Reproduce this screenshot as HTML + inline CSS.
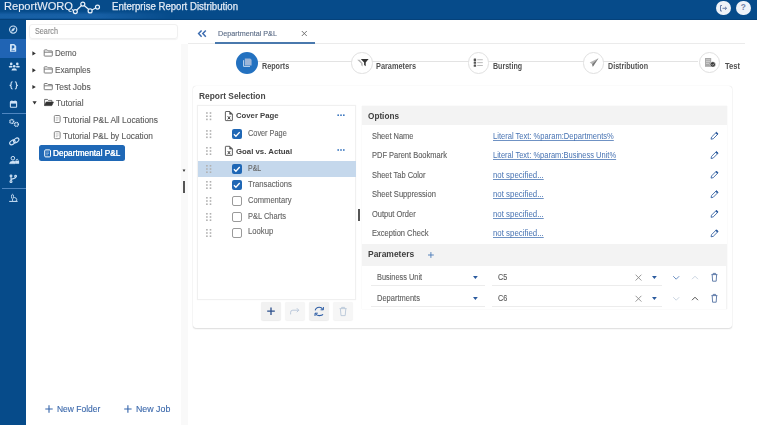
<!DOCTYPE html>
<html><head><meta charset="utf-8">
<style>
*{box-sizing:border-box;margin:0;padding:0}
html,body{width:757px;height:425px;overflow:hidden;background:#fff;font-family:"Liberation Sans",sans-serif;color:#555}
.a{position:absolute;white-space:nowrap}
svg{position:absolute;overflow:visible}
#hdr{left:0;top:0;width:757px;height:19.5px;background:#064b8a;box-shadow:inset 0 -0.8px 0 #053f75}
#side{left:0;top:19.5px;width:26px;height:406px;background:#064b8a}
.div{position:absolute;left:2px;width:24px;height:1px;background:#4f86c0}
#tree{left:26px;top:19.5px;width:154px;height:406px;background:#fff}
#strip{left:180.5px;top:44px;width:7.5px;height:381px;background:#f9f9f9}
.tx{font-size:8.2px;color:#5a5a5a}
</style></head><body>

<!-- HEADER -->
<div class="a" id="hdr"></div>
<div class="a" style="left:0;top:11px;width:175px;height:7.8px;background:linear-gradient(180deg,rgba(40,115,190,0) 0%,rgba(40,115,190,0.5) 45%,rgba(40,115,190,0.55) 80%,rgba(40,115,190,0.2) 100%);-webkit-mask-image:linear-gradient(90deg,#000 0%,#000 55%,transparent 100%)"></div>
<svg style="left:0;top:0" width="110" height="19">
  <g fill="none" stroke="#eaf2fb" stroke-width="1.2">
    <path d="M71.8 9.6 L73.6 10.6 M76.6 10.2 L81.5 5.5 M84.2 5.5 L88.8 9.5 M92 10 L95.6 8"/>
    <circle cx="75.3" cy="11.6" r="2"/>
    <circle cx="82.8" cy="4.1" r="2"/>
    <circle cx="90.1" cy="10.9" r="2"/>
    <circle cx="97.5" cy="7.1" r="2"/>
  </g>
</svg>
<div class="a" style="left:716px;top:0.7px;width:14.6px;height:14.6px;border-radius:50%;background:#eef2f8"></div>
<div class="a" style="left:736px;top:0.7px;width:14.6px;height:14.6px;border-radius:50%;background:#eef2f8"></div>
<svg style="left:716px;top:0.7px" width="15" height="15">
  <g fill="none" stroke="#5a72a0" stroke-width="0.9">
    <path d="M6 4.5 H4.5 V10 H6"/>
    <path d="M6.5 7.3 H10.5 M9 5.8 L10.6 7.3 L9 8.8"/>
  </g>
</svg>
<div class="a" style="left:736px;top:2.6px;width:14.6px;text-align:center;font-size:8.4px;line-height:1;font-weight:700;color:#7083a8">?</div>

<!-- SIDEBAR -->
<div class="a" id="side"></div>
<div class="a" style="left:0;top:38.7px;width:26px;height:19.8px;background:#2064b4"></div>
<div class="div" style="top:113px"></div>
<div class="div" style="top:188px"></div>
<svg style="left:0;top:0" width="26" height="425">
  <g fill="none" stroke="#cfe3f7" stroke-width="1.1">
    <!-- compass -->
    <circle cx="13.2" cy="29.6" r="3.6"/>
    <path d="M11.3 31.5 L12.3 28.9 L14.9 27.8 L13.9 30.4 Z" fill="#cfe3f7" stroke-width="0.4"/>
    <!-- braces -->
    <path d="M12.6 81.8 Q11.1 81.8 11.1 83.2 V84.6 Q11.1 85.4 9.6 85.4 Q11.1 85.4 11.1 86.2 V87.6 Q11.1 89 12.6 89"/>
    <path d="M14.9 81.8 Q16.4 81.8 16.4 83.2 V84.6 Q16.4 85.4 17.9 85.4 Q16.4 85.4 16.4 86.2 V87.6 Q16.4 89 14.9 89"/>
    <!-- calendar -->
    <rect x="10.4" y="101.6" width="6.2" height="5.7" rx="0.6"/>
    <path d="M10.4 102.6 H16.6" stroke-width="2"/>
    <path d="M11.9 100.4 V101.6 M15.1 100.4 V101.6" stroke-width="0.9"/>
    <!-- gears -->
    <circle cx="11.8" cy="121.5" r="1.9" stroke-width="1.5" stroke-dasharray="1 0.4"/>
    <circle cx="16.4" cy="124.4" r="1.9" stroke-width="1.5" stroke-dasharray="1 0.4"/>
    <!-- link -->
    <ellipse cx="12.4" cy="142.4" rx="3" ry="1.9" transform="rotate(-35 12.4 142.4)"/>
    <ellipse cx="16.2" cy="140.4" rx="3" ry="1.9" transform="rotate(-35 16.2 140.4)"/>
    <!-- user lock -->
    <circle cx="12.9" cy="158.2" r="1.8" stroke-width="1"/>
    <path d="M9.4 163.8 Q9.6 160.9 12.9 160.9 Q14.2 160.9 15 161.3 V163.8 Z" fill="#cfe3f7" stroke-width="0.3"/>
    <path d="M16.1 161.2 V159.9 Q17.1 158.3 18.1 159.9 V161.2" stroke-width="0.8"/>
    <!-- branch -->
    <circle cx="11" cy="175.9" r="0.9"/>
    <circle cx="15.6" cy="176.2" r="0.9"/>
    <circle cx="11" cy="181.5" r="1"/>
    <path d="M11 176.8 V180.5 M15.6 177.1 Q15.6 178.6 12.6 178.9 Q11.2 179.1 11 180"/>
    <!-- microscope -->
    <ellipse cx="12.5" cy="196.6" rx="1" ry="2.3" stroke-width="0.9"/>
    <path d="M9.2 201.4 H17.6" stroke-width="1"/>
    <path d="M12.5 199 V201" stroke-width="0.8"/>
    <path d="M14.2 197.4 Q16.8 197.8 16.8 199.8 Q16.8 201 15.6 201.2" stroke-width="0.9"/>
  </g>
  <g fill="#cfe3f7">
    <!-- file (active) -->
    <path d="M10.6 44 H14.2 L16.2 46 V51.2 Q16.2 51.8 15.6 51.8 H10.6 Q10 51.8 10 51.2 V44.6 Q10 44 10.6 44 Z"/>
    <path d="M11.8 45.6 H13.2 Q14.4 45.6 14.4 46.9 Q14.4 48.2 13.2 48.2 H12.6 V49.4 H11.8 Z" fill="#2064b4"/>
    <rect x="11.4" y="50.2" width="3.4" height="0.6" fill="#2064b4"/>
    <!-- users -->
    <circle cx="11.2" cy="63.9" r="1.3"/>
    <circle cx="17.3" cy="63.9" r="1.3"/>
    <ellipse cx="10.6" cy="66.7" rx="1.9" ry="0.9"/>
    <ellipse cx="17.9" cy="66.7" rx="1.9" ry="0.9"/>
    <circle cx="14.2" cy="66.2" r="1.3"/>
    <path d="M11.4 70.6 Q11.6 68.2 14.2 68.2 Q16.8 68.2 17 70.6 Z"/>
    <!-- user-lock body -->
    <rect x="15.1" y="161" width="4" height="2.8" rx="0.3"/>
  </g>
</svg>

<!-- TREE PANEL -->
<div class="a" id="tree"></div>
<div class="a" id="strip"></div>
<div class="a" style="left:29.3px;top:24.3px;width:148.6px;height:14.3px;border:1px solid #f0f0f0;border-radius:3px;box-shadow:0 1px 1px rgba(0,0,0,0.05)"></div>

<div class="a" style="left:4.40px;top:0px;font-size:11.600px;line-height:1;color:#e8eef7;font-weight:400;transform:scaleX(0.9558);transform-origin:0 0;-webkit-text-stroke:0.12px #e8eef7;">ReportWORQ</div>
<div class="a" style="left:111.50px;top:2px;font-size:10.000px;line-height:1;color:#e3ebf6;font-weight:400;transform:scaleX(0.9606);transform-origin:0 0;-webkit-text-stroke:0.12px #e3ebf6;-webkit-text-stroke:0.25px #e3ebf6">Enterprise Report Distribution</div>
<div class="a" style="left:34.90px;top:28px;font-size:8.200px;line-height:1;color:#8a8a8a;font-weight:400;transform:scaleX(0.8852);transform-origin:0 0;-webkit-text-stroke:0.12px #8a8a8a;">Search</div>
<svg style="left:0;top:0" width="1" height="1"><path d="M32.4 51.3 L35.8 53.4 L32.4 55.5 Z" fill="#333"/></svg>
<svg style="left:0;top:0" width="1" height="1"><g fill="none" stroke="#707070" stroke-width="0.9"><path d="M44.699999999999996 49.9 H47.199999999999996 L48.199999999999996 50.9 H51.8 Q52.3 50.9 52.3 51.4 V55.6 Q52.3 56.1 51.8 56.1 H44.699999999999996 Q44.199999999999996 56.1 44.199999999999996 55.6 V50.4 Q44.199999999999996 49.9 44.699999999999996 49.9 Z"/><path d="M44.199999999999996 52.199999999999996 H52.3"/></g></svg>
<div class="a" style="left:54.80px;top:49px;font-size:8.300px;line-height:1;color:#5c5c5c;font-weight:400;transform:scaleX(0.9661);transform-origin:0 0;-webkit-text-stroke:0.12px #5c5c5c;">Demo</div>
<svg style="left:0;top:0" width="1" height="1"><path d="M32.4 68.20000000000002 L35.8 70.30000000000001 L32.4 72.4 Z" fill="#333"/></svg>
<svg style="left:0;top:0" width="1" height="1"><g fill="none" stroke="#707070" stroke-width="0.9"><path d="M44.699999999999996 66.80000000000001 H47.199999999999996 L48.199999999999996 67.80000000000001 H51.8 Q52.3 67.80000000000001 52.3 68.30000000000001 V72.50000000000001 Q52.3 73.00000000000001 51.8 73.00000000000001 H44.699999999999996 Q44.199999999999996 73.00000000000001 44.199999999999996 72.50000000000001 V67.30000000000001 Q44.199999999999996 66.80000000000001 44.699999999999996 66.80000000000001 Z"/><path d="M44.199999999999996 69.10000000000001 H52.3"/></g></svg>
<div class="a" style="left:54.80px;top:66px;font-size:8.300px;line-height:1;color:#5c5c5c;font-weight:400;transform:scaleX(0.9796);transform-origin:0 0;-webkit-text-stroke:0.12px #5c5c5c;">Examples</div>
<svg style="left:0;top:0" width="1" height="1"><path d="M32.4 84.9 L35.8 87.0 L32.4 89.1 Z" fill="#333"/></svg>
<svg style="left:0;top:0" width="1" height="1"><g fill="none" stroke="#707070" stroke-width="0.9"><path d="M44.699999999999996 83.5 H47.199999999999996 L48.199999999999996 84.5 H51.8 Q52.3 84.5 52.3 85.0 V89.2 Q52.3 89.7 51.8 89.7 H44.699999999999996 Q44.199999999999996 89.7 44.199999999999996 89.2 V84.0 Q44.199999999999996 83.5 44.699999999999996 83.5 Z"/><path d="M44.199999999999996 85.8 H52.3"/></g></svg>
<div class="a" style="left:54.80px;top:83px;font-size:8.300px;line-height:1;color:#5c5c5c;font-weight:400;transform:scaleX(1.0180);transform-origin:0 0;-webkit-text-stroke:0.12px #5c5c5c;">Test Jobs</div>
<svg style="left:0;top:0" width="1" height="1"><path d="M32.5 101.2 L36.7 101.2 L34.6 104.5 Z" fill="#333"/></svg>
<svg style="left:0;top:0" width="1" height="1"><g fill="#333" stroke="#333" stroke-width="0.7"><path d="M44.6 105.6 V99.4 H47.400000000000006 L48.400000000000006 100.4 H51.800000000000004 V101.8" fill="none"/><path d="M44.6 105.6 L46.2 102.0 H53.400000000000006 L51.800000000000004 105.6 Z"/></g></svg>
<div class="a" style="left:56.10px;top:99px;font-size:8.300px;line-height:1;color:#5c5c5c;font-weight:400;transform:scaleX(1.0045);transform-origin:0 0;-webkit-text-stroke:0.12px #5c5c5c;">Tutorial</div>
<svg style="left:0;top:0" width="1" height="1"><g fill="none" stroke="#858585" stroke-width="1"><rect x="54.3" y="115.5" width="5.8" height="7" rx="1"/><path d="M55.8 117.6 H58.599999999999994 M55.8 119.0 H58.599999999999994 M55.8 120.4 H57.599999999999994" stroke-width="0.6" opacity="0.7"/></g></svg>
<div class="a" style="left:62.90px;top:116px;font-size:8.300px;line-height:1;color:#5c5c5c;font-weight:400;transform:scaleX(1.0109);transform-origin:0 0;-webkit-text-stroke:0.12px #5c5c5c;">Tutorial P&amp;L All Locations</div>
<svg style="left:0;top:0" width="1" height="1"><g fill="none" stroke="#858585" stroke-width="1"><rect x="54.3" y="131.70000000000002" width="5.8" height="7" rx="1"/><path d="M55.8 133.8 H58.599999999999994 M55.8 135.20000000000002 H58.599999999999994 M55.8 136.60000000000002 H57.599999999999994" stroke-width="0.6" opacity="0.7"/></g></svg>
<div class="a" style="left:62.90px;top:132px;font-size:8.300px;line-height:1;color:#5c5c5c;font-weight:400;transform:scaleX(1.0020);transform-origin:0 0;-webkit-text-stroke:0.12px #5c5c5c;">Tutorial P&amp;L by Location</div>
<div class="a" style="left:39.2px;top:145.3px;width:86px;height:16.1px;background:#1f68b6;border-radius:2.5px"></div>
<svg style="left:0;top:0" width="1" height="1"><g fill="none" stroke="#fff" stroke-width="1"><rect x="44.7" y="149.9" width="5.8" height="7" rx="1"/><path d="M46.2 152.0 H49.0 M46.2 153.4 H49.0 M46.2 154.8 H48.0" stroke-width="0.6" opacity="0.7"/></g></svg>
<div class="a" style="left:52.60px;top:149px;font-size:8.300px;line-height:1;color:#fff;font-weight:400;transform:scaleX(0.9937);transform-origin:0 0;-webkit-text-stroke:0.12px #fff;text-shadow:0 0 0.3px #fff">Departmental P&amp;L</div>
<svg style="left:0;top:0" width="1" height="1"><path d="M45.3 409 H52.7 M49 405.3 V412.7 M124.2 409 H131.6 M127.9 405.3 V412.7" stroke="#3565ab" stroke-width="1.1"/></svg>
<div class="a" style="left:57.00px;top:404px;font-size:9.600px;line-height:1;color:#3b68ab;font-weight:400;transform:scaleX(0.8840);transform-origin:0 0;-webkit-text-stroke:0.12px #3b68ab;">New Folder</div>
<div class="a" style="left:135.70px;top:404px;font-size:9.600px;line-height:1;color:#3b68ab;font-weight:400;transform:scaleX(0.9183);transform-origin:0 0;-webkit-text-stroke:0.12px #3b68ab;">New Job</div>
<div class="a" style="left:188px;top:19.5px;width:557px;height:24px;background:#fff;border-bottom:1px solid #ebebeb"></div>
<svg style="left:0;top:0" width="1" height="1"><g fill="none" stroke="#3c6cb0" stroke-width="1.5"><path d="M201.6 30.4 L198.6 33.6 L201.6 36.8 M205.8 30.4 L202.8 33.6 L205.8 36.8"/></g></svg>
<div class="a" style="left:217.80px;top:30px;font-size:7.700px;line-height:1;color:#5a6b85;font-weight:400;transform:scaleX(0.9376);transform-origin:0 0;-webkit-text-stroke:0.12px #5a6b85;">Departmental P&amp;L</div>
<svg style="left:0;top:0" width="1" height="1"><path d="M301.8 31 L306.8 36 M306.8 31 L301.8 36" stroke="#666" stroke-width="0.9"/></svg>
<div class="a" style="left:214.9px;top:42px;width:100.1px;height:1.6px;background:#4a79ad"></div>
<div class="a" style="left:258px;top:61px;width:440px;height:1px;background:#e3e3e3"></div>
<div class="a" style="left:236px;top:51.8px;width:22px;height:22px;border-radius:50%;background:#2371c0"></div>
<div class="a" style="left:261.80px;top:63px;font-size:8.200px;line-height:1;color:#505050;font-weight:700;transform:scaleX(0.8776);transform-origin:0 0;">Reports</div>
<div class="a" style="left:351.4px;top:52.4px;width:21.2px;height:21.2px;border-radius:50%;background:#fff;border:1px solid #e0e0e0"></div>
<div class="a" style="left:376.30px;top:63px;font-size:8.200px;line-height:1;color:#505050;font-weight:700;transform:scaleX(0.8975);transform-origin:0 0;">Parameters</div>
<div class="a" style="left:467.79999999999995px;top:52.4px;width:21.2px;height:21.2px;border-radius:50%;background:#fff;border:1px solid #e0e0e0"></div>
<div class="a" style="left:493.30px;top:63px;font-size:8.200px;line-height:1;color:#505050;font-weight:700;transform:scaleX(0.8633);transform-origin:0 0;">Bursting</div>
<div class="a" style="left:583.3px;top:52.4px;width:21.2px;height:21.2px;border-radius:50%;background:#fff;border:1px solid #e0e0e0"></div>
<div class="a" style="left:607.60px;top:63px;font-size:8.200px;line-height:1;color:#505050;font-weight:700;transform:scaleX(0.8716);transform-origin:0 0;">Distribution</div>
<div class="a" style="left:698.6px;top:52.1px;width:21.2px;height:21.2px;border-radius:50%;background:#fff;border:1px solid #e0e0e0"></div>
<div class="a" style="left:724.50px;top:63px;font-size:8.200px;line-height:1;color:#505050;font-weight:700;transform:scaleX(0.9226);transform-origin:0 0;">Test</div>
<svg style="left:0;top:0" width="1" height="1"><path d="M243.6 60.2 V66.4 H250" stroke="#d4e3f4" stroke-width="0.9" fill="none"/><path d="M244.8 58.4 H250.2 L251.6 59.8 V65.6 H244.8 Z" fill="#9db6d8"/><g fill="#333"><path d="M360.8 59 H368.6 L365.7 62.6 V66.2 L364.1 64.9 V62.6 Z"/></g><g fill="#b0b0b0"><path d="M357.2 59.8 H359.6 L362.6 63.2 V66.6 L361.2 65.2 V63.4 Z"/></g><g fill="#555"><rect x="473.7" y="58.6" width="2.4" height="2.3" rx="0.5"/><rect x="473.7" y="61.5" width="2.4" height="2.3" rx="0.5"/><rect x="473.7" y="64.4" width="2.4" height="2.3" rx="0.5"/><rect x="477.2" y="59.4" width="5.6" height="0.8" fill="#aaa"/><rect x="477.2" y="62.3" width="5.6" height="0.8" fill="#aaa"/><rect x="477.2" y="65.2" width="5.6" height="0.8" fill="#aaa"/></g><g><path d="M598.5 58.2 L589.7 62.6 L592.2 64.2 L592.8 66.8 Z" fill="#b5b5b5"/><path d="M598.5 58.2 L592.2 64.2 L592.8 66.8 Z" fill="#777"/></g><g><path d="M705 58 H711.2 V66.8 H705 Z" fill="#a8a8a8"/><path d="M706 59.8 H710.2 M706 61.6 H710.2 M706 63.4 H709" stroke="#e8e8e8" stroke-width="0.6"/><circle cx="712.8" cy="64.4" r="2.7" fill="#3a3a3a" stroke="#fff" stroke-width="0.5"/><path d="M711.6 64.3 L712.6 65.3 L714.1 63.6" stroke="#ddd" stroke-width="0.7" fill="none"/></g></svg>
<div class="a" style="left:192.6px;top:85.8px;width:539px;height:242px;background:#fff;border-radius:3px;box-shadow:0 0 1px rgba(0,0,0,0.18),0 1px 1.5px rgba(0,0,0,0.12)"></div>
<div class="a" style="left:198.70px;top:92px;font-size:8.600px;line-height:1;color:#474747;font-weight:700;transform:scaleX(0.9745);transform-origin:0 0;">Report Selection</div>
<div class="a" style="left:196.8px;top:105px;width:159.7px;height:194.8px;background:#fff;border:1px solid #f0f0f0;box-shadow:0 0 1px rgba(0,0,0,0.06)"></div>
<div class="a" style="left:197.5px;top:161.4px;width:158.3px;height:15.8px;background:#c5d8ec"></div>
<svg style="left:0;top:0" width="1" height="1"><rect x="206.1" y="112.2" width="1.6" height="1.6" fill="#b0b0b0"/><rect x="206.1" y="115.4" width="1.6" height="1.6" fill="#b0b0b0"/><rect x="206.1" y="118.6" width="1.6" height="1.6" fill="#b0b0b0"/><rect x="209.7" y="112.2" width="1.6" height="1.6" fill="#b0b0b0"/><rect x="209.7" y="115.4" width="1.6" height="1.6" fill="#b0b0b0"/><rect x="209.7" y="118.6" width="1.6" height="1.6" fill="#b0b0b0"/></svg>
<svg style="left:0;top:0" width="1" height="1"><g fill="none" stroke="#505050" stroke-width="0.9"><path d="M225.8 111.5 H229.8 L232.4 114.1 V120.2 Q232.4 120.6 232 120.6 H225.8 Q225.4 120.6 225.4 120.2 V111.9 Q225.4 111.5 225.8 111.5 Z"/><path d="M229.6 111.6 L232.3 114.3 H229.6 Z" fill="#505050" stroke-width="0.5"/><path d="M227.7 116.2 L230.3 119.4 M230.3 116.2 L227.7 119.4" stroke-width="1" stroke="#404040"/></g></svg>
<div class="a" style="left:236.40px;top:112px;font-size:8.000px;line-height:1;color:#404040;font-weight:700;transform:scaleX(0.9676);transform-origin:0 0;">Cover Page</div>
<svg style="left:0;top:0" width="1" height="1"><g fill="#3d78c0"><rect x="337.4" y="114.4" width="1.6" height="1.6"/><rect x="340.2" y="114.4" width="1.6" height="1.6"/><rect x="343" y="114.4" width="1.6" height="1.6"/></g></svg>
<svg style="left:0;top:0" width="1" height="1"><rect x="206.1" y="130.1" width="1.6" height="1.6" fill="#b0b0b0"/><rect x="206.1" y="133.3" width="1.6" height="1.6" fill="#b0b0b0"/><rect x="206.1" y="136.5" width="1.6" height="1.6" fill="#b0b0b0"/><rect x="209.7" y="130.1" width="1.6" height="1.6" fill="#b0b0b0"/><rect x="209.7" y="133.3" width="1.6" height="1.6" fill="#b0b0b0"/><rect x="209.7" y="136.5" width="1.6" height="1.6" fill="#b0b0b0"/></svg>
<div class="a" style="left:231.7px;top:129.1px;width:10px;height:10px;background:#1f67b5;border-radius:2px"></div>
<svg style="left:0;top:0" width="1" height="1"><path d="M233.89999999999998 134.29999999999998 L235.89999999999998 136.29999999999998 L239.7 132.1" stroke="#fff" stroke-width="1.3" fill="none"/></svg>
<div class="a" style="left:248.10px;top:130px;font-size:8.200px;line-height:1;color:#666;font-weight:400;transform:scaleX(0.8959);transform-origin:0 0;-webkit-text-stroke:0.12px #666;">Cover Page</div>
<svg style="left:0;top:0" width="1" height="1"><rect x="206.1" y="147.0" width="1.6" height="1.6" fill="#b0b0b0"/><rect x="206.1" y="150.2" width="1.6" height="1.6" fill="#b0b0b0"/><rect x="206.1" y="153.4" width="1.6" height="1.6" fill="#b0b0b0"/><rect x="209.7" y="147.0" width="1.6" height="1.6" fill="#b0b0b0"/><rect x="209.7" y="150.2" width="1.6" height="1.6" fill="#b0b0b0"/><rect x="209.7" y="153.4" width="1.6" height="1.6" fill="#b0b0b0"/></svg>
<svg style="left:0;top:0" width="1" height="1"><g fill="none" stroke="#505050" stroke-width="0.9"><path d="M225.8 146.3 H229.8 L232.4 148.9 V155.0 Q232.4 155.4 232 155.4 H225.8 Q225.4 155.4 225.4 155.0 V146.70000000000002 Q225.4 146.3 225.8 146.3 Z"/><path d="M229.6 146.4 L232.3 149.10000000000002 H229.6 Z" fill="#505050" stroke-width="0.5"/><path d="M227.7 151.0 L230.3 154.20000000000002 M230.3 151.0 L227.7 154.20000000000002" stroke-width="1" stroke="#404040"/></g></svg>
<div class="a" style="left:236.40px;top:148px;font-size:8.000px;line-height:1;color:#404040;font-weight:700;transform:scaleX(0.9757);transform-origin:0 0;">Goal vs. Actual</div>
<svg style="left:0;top:0" width="1" height="1"><g fill="#3d78c0"><rect x="337.4" y="149.2" width="1.6" height="1.6"/><rect x="340.2" y="149.2" width="1.6" height="1.6"/><rect x="343" y="149.2" width="1.6" height="1.6"/></g></svg>
<svg style="left:0;top:0" width="1" height="1"><rect x="206.1" y="165.0" width="1.6" height="1.6" fill="#b0b0b0"/><rect x="206.1" y="168.2" width="1.6" height="1.6" fill="#b0b0b0"/><rect x="206.1" y="171.4" width="1.6" height="1.6" fill="#b0b0b0"/><rect x="209.7" y="165.0" width="1.6" height="1.6" fill="#b0b0b0"/><rect x="209.7" y="168.2" width="1.6" height="1.6" fill="#b0b0b0"/><rect x="209.7" y="171.4" width="1.6" height="1.6" fill="#b0b0b0"/></svg>
<div class="a" style="left:231.7px;top:164.0px;width:10px;height:10px;background:#1f67b5;border-radius:2px"></div>
<svg style="left:0;top:0" width="1" height="1"><path d="M233.89999999999998 169.2 L235.89999999999998 171.2 L239.7 167.0" stroke="#fff" stroke-width="1.3" fill="none"/></svg>
<div class="a" style="left:248.10px;top:165px;font-size:8.200px;line-height:1;color:#666;font-weight:400;transform:scaleX(0.8514);transform-origin:0 0;-webkit-text-stroke:0.12px #666;">P&amp;L</div>
<svg style="left:0;top:0" width="1" height="1"><rect x="206.1" y="181.0" width="1.6" height="1.6" fill="#b0b0b0"/><rect x="206.1" y="184.2" width="1.6" height="1.6" fill="#b0b0b0"/><rect x="206.1" y="187.4" width="1.6" height="1.6" fill="#b0b0b0"/><rect x="209.7" y="181.0" width="1.6" height="1.6" fill="#b0b0b0"/><rect x="209.7" y="184.2" width="1.6" height="1.6" fill="#b0b0b0"/><rect x="209.7" y="187.4" width="1.6" height="1.6" fill="#b0b0b0"/></svg>
<div class="a" style="left:231.7px;top:180.0px;width:10px;height:10px;background:#1f67b5;border-radius:2px"></div>
<svg style="left:0;top:0" width="1" height="1"><path d="M233.89999999999998 185.2 L235.89999999999998 187.2 L239.7 183.0" stroke="#fff" stroke-width="1.3" fill="none"/></svg>
<div class="a" style="left:248.10px;top:181px;font-size:8.200px;line-height:1;color:#666;font-weight:400;transform:scaleX(0.9434);transform-origin:0 0;-webkit-text-stroke:0.12px #666;">Transactions</div>
<svg style="left:0;top:0" width="1" height="1"><rect x="206.1" y="197.0" width="1.6" height="1.6" fill="#b0b0b0"/><rect x="206.1" y="200.2" width="1.6" height="1.6" fill="#b0b0b0"/><rect x="206.1" y="203.4" width="1.6" height="1.6" fill="#b0b0b0"/><rect x="209.7" y="197.0" width="1.6" height="1.6" fill="#b0b0b0"/><rect x="209.7" y="200.2" width="1.6" height="1.6" fill="#b0b0b0"/><rect x="209.7" y="203.4" width="1.6" height="1.6" fill="#b0b0b0"/></svg>
<div class="a" style="left:231.7px;top:196.0px;width:10px;height:10px;background:#fff;border:1px solid #9a9a9a;border-radius:2px"></div>
<div class="a" style="left:248.10px;top:197px;font-size:8.200px;line-height:1;color:#666;font-weight:400;transform:scaleX(0.9287);transform-origin:0 0;-webkit-text-stroke:0.12px #666;">Commentary</div>
<svg style="left:0;top:0" width="1" height="1"><rect x="206.1" y="213.0" width="1.6" height="1.6" fill="#b0b0b0"/><rect x="206.1" y="216.2" width="1.6" height="1.6" fill="#b0b0b0"/><rect x="206.1" y="219.4" width="1.6" height="1.6" fill="#b0b0b0"/><rect x="209.7" y="213.0" width="1.6" height="1.6" fill="#b0b0b0"/><rect x="209.7" y="216.2" width="1.6" height="1.6" fill="#b0b0b0"/><rect x="209.7" y="219.4" width="1.6" height="1.6" fill="#b0b0b0"/></svg>
<div class="a" style="left:231.7px;top:212.0px;width:10px;height:10px;background:#fff;border:1px solid #9a9a9a;border-radius:2px"></div>
<div class="a" style="left:248.10px;top:213px;font-size:8.200px;line-height:1;color:#666;font-weight:400;transform:scaleX(0.9129);transform-origin:0 0;-webkit-text-stroke:0.12px #666;">P&amp;L Charts</div>
<svg style="left:0;top:0" width="1" height="1"><rect x="206.1" y="229.0" width="1.6" height="1.6" fill="#b0b0b0"/><rect x="206.1" y="232.2" width="1.6" height="1.6" fill="#b0b0b0"/><rect x="206.1" y="235.4" width="1.6" height="1.6" fill="#b0b0b0"/><rect x="209.7" y="229.0" width="1.6" height="1.6" fill="#b0b0b0"/><rect x="209.7" y="232.2" width="1.6" height="1.6" fill="#b0b0b0"/><rect x="209.7" y="235.4" width="1.6" height="1.6" fill="#b0b0b0"/></svg>
<div class="a" style="left:231.7px;top:228.0px;width:10px;height:10px;background:#fff;border:1px solid #9a9a9a;border-radius:2px"></div>
<div class="a" style="left:248.10px;top:228px;font-size:8.200px;line-height:1;color:#666;font-weight:400;transform:scaleX(0.9366);transform-origin:0 0;-webkit-text-stroke:0.12px #666;">Lookup</div>
<div class="a" style="left:261px;top:302.4px;width:20px;height:17.7px;background:#f1f1f1;border-radius:2px;box-shadow:0 0.5px 1px rgba(0,0,0,0.08)"></div>
<div class="a" style="left:285.2px;top:302.4px;width:20px;height:17.7px;background:#f6f6f6;border-radius:2px;box-shadow:0 0.5px 1px rgba(0,0,0,0.05)"></div>
<div class="a" style="left:309px;top:302.4px;width:20px;height:17.7px;background:#f1f1f1;border-radius:2px;box-shadow:0 0.5px 1px rgba(0,0,0,0.08)"></div>
<div class="a" style="left:333.2px;top:302.4px;width:20px;height:17.7px;background:#f6f6f6;border-radius:2px;box-shadow:0 0.5px 1px rgba(0,0,0,0.05)"></div>
<svg style="left:0;top:0" width="1" height="1"><path d="M267.2 311.2 H274.8 M271 307.4 V315" stroke="#2b4f8c" stroke-width="1.3"/><path d="M290.6 314.4 V312.4 Q290.6 310.2 292.8 310.2 H298.8 M296.8 308.2 L298.8 310.2 L296.8 312.2" stroke="#b5c4d8" stroke-width="0.9" fill="none"/><g stroke="#2e5ea6" stroke-width="1.1" fill="none"><path d="M315.2 310.4 Q316 307.2 319.2 307.2 Q321.6 307.2 322.8 309.4"/><path d="M323 314.4 Q322.2 315.6 319.2 315.6 Q316.6 315.6 315.4 313.4"/><path d="M323.4 307 V309.8 H320.6 M315 316 V313.2 H317.8" stroke-width="1"/></g><g stroke="#b8c6d8" stroke-width="0.9" fill="none"><path d="M339.6 308.6 H346.6 M341.6 308.4 V307.4 H344.6 V308.4 M340.4 308.8 L341 315.6 H345.2 L345.8 308.8"/></g></svg>
<div class="a" style="left:361.6px;top:105.8px;width:365.6px;height:203px;background:#f3f3f3;box-shadow:0 0 1px rgba(0,0,0,0.1)"></div>
<div class="a" style="left:367.80px;top:112px;font-size:8.600px;line-height:1;color:#404040;font-weight:700;transform:scaleX(0.9541);transform-origin:0 0;">Options</div>
<div class="a" style="left:362px;top:124.6px;width:364.6px;height:119px;background:#fff"></div>
<div class="a" style="left:372.00px;top:133px;font-size:8.200px;line-height:1;color:#606060;font-weight:400;transform:scaleX(0.9103);transform-origin:0 0;-webkit-text-stroke:0.12px #606060;">Sheet Name</div>
<div class="a" style="left:493.20px;top:133px;font-size:8.200px;line-height:1;color:#4672b2;font-weight:400;transform:scaleX(0.9229);transform-origin:0 0;-webkit-text-stroke:0.12px #4672b2;text-decoration:underline;text-decoration-color:#6f92c4;text-underline-offset:1px;text-decoration-thickness:0.6px;text-decoration-skip-ink:none;-webkit-text-stroke:0">Literal Text: %param:Departments%</div>
<svg style="left:0;top:0" width="1" height="1"><g transform="translate(714.2 136.1) rotate(45)"><path d="M-1.2 -4.2 H1.2 V2.6 L0 4.4 L-1.2 2.6 Z" fill="none" stroke="#2a5a9e" stroke-width="0.8"/><rect x="-1.2" y="-4.6" width="2.4" height="1.6" fill="#2a5a9e"/></g></svg>
<div class="a" style="left:372.00px;top:152px;font-size:8.200px;line-height:1;color:#606060;font-weight:400;transform:scaleX(0.9142);transform-origin:0 0;-webkit-text-stroke:0.12px #606060;">PDF Parent Bookmark</div>
<div class="a" style="left:493.20px;top:152px;font-size:8.200px;line-height:1;color:#4672b2;font-weight:400;transform:scaleX(0.9181);transform-origin:0 0;-webkit-text-stroke:0.12px #4672b2;text-decoration:underline;text-decoration-color:#6f92c4;text-underline-offset:1px;text-decoration-thickness:0.6px;text-decoration-skip-ink:none;-webkit-text-stroke:0">Literal Text: %param:Business Unit%</div>
<svg style="left:0;top:0" width="1" height="1"><g transform="translate(714.2 155.4) rotate(45)"><path d="M-1.2 -4.2 H1.2 V2.6 L0 4.4 L-1.2 2.6 Z" fill="none" stroke="#2a5a9e" stroke-width="0.8"/><rect x="-1.2" y="-4.6" width="2.4" height="1.6" fill="#2a5a9e"/></g></svg>
<div class="a" style="left:372.00px;top:172px;font-size:8.200px;line-height:1;color:#606060;font-weight:400;transform:scaleX(0.9138);transform-origin:0 0;-webkit-text-stroke:0.12px #606060;">Sheet Tab Color</div>
<div class="a" style="left:493.20px;top:172px;font-size:8.200px;line-height:1;color:#4672b2;font-weight:400;transform:scaleX(0.9607);transform-origin:0 0;-webkit-text-stroke:0.12px #4672b2;text-decoration:underline;text-decoration-color:#6f92c4;text-underline-offset:1px;text-decoration-thickness:0.6px;text-decoration-skip-ink:none;-webkit-text-stroke:0">not specified...</div>
<svg style="left:0;top:0" width="1" height="1"><g transform="translate(714.2 175.0) rotate(45)"><path d="M-1.2 -4.2 H1.2 V2.6 L0 4.4 L-1.2 2.6 Z" fill="none" stroke="#2a5a9e" stroke-width="0.8"/><rect x="-1.2" y="-4.6" width="2.4" height="1.6" fill="#2a5a9e"/></g></svg>
<div class="a" style="left:372.00px;top:191px;font-size:8.200px;line-height:1;color:#606060;font-weight:400;transform:scaleX(0.9235);transform-origin:0 0;-webkit-text-stroke:0.12px #606060;">Sheet Suppression</div>
<div class="a" style="left:493.20px;top:191px;font-size:8.200px;line-height:1;color:#4672b2;font-weight:400;transform:scaleX(0.9607);transform-origin:0 0;-webkit-text-stroke:0.12px #4672b2;text-decoration:underline;text-decoration-color:#6f92c4;text-underline-offset:1px;text-decoration-thickness:0.6px;text-decoration-skip-ink:none;-webkit-text-stroke:0">not specified...</div>
<svg style="left:0;top:0" width="1" height="1"><g transform="translate(714.2 194.6) rotate(45)"><path d="M-1.2 -4.2 H1.2 V2.6 L0 4.4 L-1.2 2.6 Z" fill="none" stroke="#2a5a9e" stroke-width="0.8"/><rect x="-1.2" y="-4.6" width="2.4" height="1.6" fill="#2a5a9e"/></g></svg>
<div class="a" style="left:372.00px;top:211px;font-size:8.200px;line-height:1;color:#606060;font-weight:400;transform:scaleX(0.9132);transform-origin:0 0;-webkit-text-stroke:0.12px #606060;">Output Order</div>
<div class="a" style="left:493.20px;top:211px;font-size:8.200px;line-height:1;color:#4672b2;font-weight:400;transform:scaleX(0.9607);transform-origin:0 0;-webkit-text-stroke:0.12px #4672b2;text-decoration:underline;text-decoration-color:#6f92c4;text-underline-offset:1px;text-decoration-thickness:0.6px;text-decoration-skip-ink:none;-webkit-text-stroke:0">not specified...</div>
<svg style="left:0;top:0" width="1" height="1"><g transform="translate(714.2 214.2) rotate(45)"><path d="M-1.2 -4.2 H1.2 V2.6 L0 4.4 L-1.2 2.6 Z" fill="none" stroke="#2a5a9e" stroke-width="0.8"/><rect x="-1.2" y="-4.6" width="2.4" height="1.6" fill="#2a5a9e"/></g></svg>
<div class="a" style="left:372.00px;top:230px;font-size:8.200px;line-height:1;color:#606060;font-weight:400;transform:scaleX(0.9181);transform-origin:0 0;-webkit-text-stroke:0.12px #606060;">Exception Check</div>
<div class="a" style="left:493.20px;top:230px;font-size:8.200px;line-height:1;color:#4672b2;font-weight:400;transform:scaleX(0.9607);transform-origin:0 0;-webkit-text-stroke:0.12px #4672b2;text-decoration:underline;text-decoration-color:#6f92c4;text-underline-offset:1px;text-decoration-thickness:0.6px;text-decoration-skip-ink:none;-webkit-text-stroke:0">not specified...</div>
<svg style="left:0;top:0" width="1" height="1"><g transform="translate(714.2 233.7) rotate(45)"><path d="M-1.2 -4.2 H1.2 V2.6 L0 4.4 L-1.2 2.6 Z" fill="none" stroke="#2a5a9e" stroke-width="0.8"/><rect x="-1.2" y="-4.6" width="2.4" height="1.6" fill="#2a5a9e"/></g></svg>
<div class="a" style="left:367.70px;top:250px;font-size:8.600px;line-height:1;color:#404040;font-weight:700;transform:scaleX(0.9860);transform-origin:0 0;">Parameters</div>
<svg style="left:0;top:0" width="1" height="1"><path d="M428 255 H433.8 M430.9 252.1 V257.9" stroke="#4a7ab8" stroke-width="0.9"/></svg>
<div class="a" style="left:362px;top:266.3px;width:364.4px;height:42.3px;background:#fff"></div>
<div class="a" style="left:377.20px;top:273px;font-size:8.400px;line-height:1;color:#606060;font-weight:400;transform:scaleX(0.8801);transform-origin:0 0;-webkit-text-stroke:0.12px #606060;">Business Unit</div>
<div class="a" style="left:371px;top:285.09999999999997px;width:114.4px;height:0.8px;background:#ececec"></div>
<svg style="left:0;top:0" width="1" height="1"><path d="M473 275.9 H477.8 L475.4 279.0 Z" fill="#2a5a9e"/></svg>
<div class="a" style="left:498.00px;top:273px;font-size:8.400px;line-height:1;color:#5a5a5a;font-weight:400;transform:scaleX(0.8652);transform-origin:0 0;-webkit-text-stroke:0.12px #5a5a5a;">C5</div>
<div class="a" style="left:492px;top:285.09999999999997px;width:170px;height:0.8px;background:#ececec"></div>
<svg style="left:0;top:0" width="1" height="1"><path d="M635.6 274.7 L641.4 280.5 M641.4 274.7 L635.6 280.5" stroke="#858585" stroke-width="0.85"/><path d="M652 275.9 H656.8 L654.4 279.0 Z" fill="#2a5a9e"/></svg>
<div class="a" style="left:377.20px;top:294px;font-size:8.400px;line-height:1;color:#606060;font-weight:400;transform:scaleX(0.8942);transform-origin:0 0;-webkit-text-stroke:0.12px #606060;">Departments</div>
<div class="a" style="left:371px;top:306.2px;width:114.4px;height:0.8px;background:#ececec"></div>
<svg style="left:0;top:0" width="1" height="1"><path d="M473 297.0 H477.8 L475.4 300.1 Z" fill="#2a5a9e"/></svg>
<div class="a" style="left:498.00px;top:294px;font-size:8.400px;line-height:1;color:#5a5a5a;font-weight:400;transform:scaleX(0.8652);transform-origin:0 0;-webkit-text-stroke:0.12px #5a5a5a;">C6</div>
<div class="a" style="left:492px;top:306.2px;width:170px;height:0.8px;background:#ececec"></div>
<svg style="left:0;top:0" width="1" height="1"><path d="M635.6 295.8 L641.4 301.6 M641.4 295.8 L635.6 301.6" stroke="#858585" stroke-width="0.85"/><path d="M652 297.0 H656.8 L654.4 300.1 Z" fill="#2a5a9e"/></svg>
<svg style="left:0;top:0" width="1" height="1"><path d="M673.2 276.2 L676.2 279.2 L679.2 276.2" stroke="#5b83bc" stroke-width="0.9" fill="none"/><path d="M692 279.2 L695 276.2 L698 279.2" stroke="#c5d0de" stroke-width="0.9" fill="none"/><g stroke="#4a6a9e" stroke-width="0.85" fill="none"><path d="M711.4 274.59999999999997 H717.4 M713.1999999999999 274.4 V273.4 H715.6 V274.4 M712.1999999999999 274.79999999999995 L712.6 281.2 H716.1999999999999 L716.6 274.79999999999995"/></g><path d="M673.2 297.2 L676.2 300.2 L679.2 297.2" stroke="#c5d0de" stroke-width="0.9" fill="none"/><path d="M692 300.2 L695 297.2 L698 300.2" stroke="#444" stroke-width="0.9" fill="none"/><g stroke="#4a6a9e" stroke-width="0.85" fill="none"><path d="M711.4 295.59999999999997 H717.4 M713.1999999999999 295.4 V294.4 H715.6 V295.4 M712.1999999999999 295.79999999999995 L712.6 302.2 H716.1999999999999 L716.6 295.79999999999995"/></g></svg>
<div class="a" style="left:183.2px;top:180.9px;width:1.5px;height:12.5px;background:#555"></div>
<svg style="left:0;top:0" width="1" height="1"><path d="M182.6 169.6 L185.4 169.6 L184 172 Z" fill="#333"/></svg>
<div class="a" style="left:358.4px;top:208.6px;width:1.5px;height:12.3px;background:#555"></div>
<!-- MAIN -->

</body></html>
